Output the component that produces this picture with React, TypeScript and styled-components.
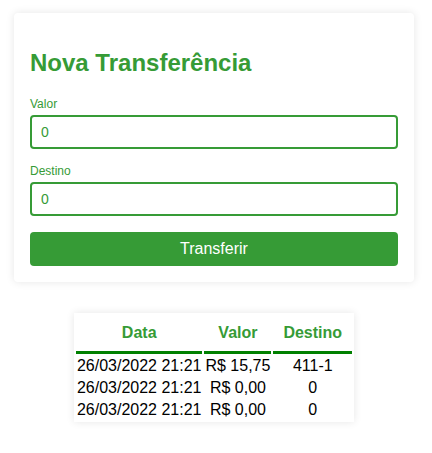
import React from "react";
import styled, { createGlobalStyle } from "styled-components";

const GREEN = "#369b36";

const Global = createGlobalStyle`
  html, body { margin: 0; padding: 0; background: #ffffff; }
  body { font-family: "Liberation Sans", Arial, sans-serif; }
`;

const Page = styled.div`
  width: 428px;
  padding-top: 13px;
  padding-bottom: 20px;
  display: flex;
  flex-direction: column;
  align-items: center;
`;

const Card = styled.form`
  box-sizing: border-box;
  width: 400px;
  padding: 16px;
  background: #fff;
  border-radius: 4px;
  box-shadow: 0 0 8px rgba(0, 0, 0, 0.1);
  display: flex;
  flex-direction: column;
`;

const Title = styled.h2`
  font-size: 24px;
  font-weight: bold;
  color: ${GREEN};
  margin: 19.92px 0;
`;

const Label = styled.label`
  font-size: 12px;
  color: ${GREEN};
  margin-bottom: 4px;
`;

const Input = styled.input<{ $last?: boolean }>`
  box-sizing: border-box;
  height: 34px;
  width: 100%;
  border: 2px solid ${GREEN};
  border-radius: 4px;
  padding: 0 9px;
  font-family: "Liberation Sans", Arial, sans-serif;
  font-size: 14px;
  color: ${GREEN};
  outline: none;
  margin-bottom: ${(p) => (p.$last ? "16px" : "15px")};
`;

const Button = styled.button`
  height: 34px;
  width: 100%;
  border: none;
  border-radius: 4px;
  background: ${GREEN};
  color: #fff;
  font-family: "Liberation Sans", Arial, sans-serif;
  font-size: 16px;
  cursor: pointer;
`;

const Table = styled.table`
  margin-top: 31px;
  background: #fff;
  border-spacing: 2px;
  box-shadow: 0 0 8px rgba(0, 0, 0, 0.1);
  font-family: "Liberation Sans", Arial, sans-serif;
  font-size: 16px;
`;

const Th = styled.th`
  padding: 9px 10px;
  color: ${GREEN};
  font-weight: bold;
  border-bottom: 3px solid #008000;
`;

const Td = styled.td`
  padding: 1px;
  color: #000;
  text-align: center;
`;

const rows = [
  { data: "26/03/2022 21:21", valor: "R$ 15,75", destino: "411-1" },
  { data: "26/03/2022 21:21", valor: "R$ 0,00", destino: "0" },
  { data: "26/03/2022 21:21", valor: "R$ 0,00", destino: "0" },
];

export default function App() {
  return (
    <>
      <Global />
      <Page>
        <Card onSubmit={(e) => e.preventDefault()}>
          <Title>Nova Transferência</Title>
          <Label>Valor</Label>
          <Input type="text" defaultValue="0" />
          <Label>Destino</Label>
          <Input type="text" defaultValue="0" $last />
          <Button type="submit">Transferir</Button>
        </Card>
        <Table>
          <thead>
            <tr>
              <Th>Data</Th>
              <Th>Valor</Th>
              <Th>Destino</Th>
            </tr>
          </thead>
          <tbody>
            {rows.map((r, i) => (
              <tr key={i}>
                <Td>{r.data}</Td>
                <Td>{r.valor}</Td>
                <Td>{r.destino}</Td>
              </tr>
            ))}
          </tbody>
        </Table>
      </Page>
    </>
  );
}
